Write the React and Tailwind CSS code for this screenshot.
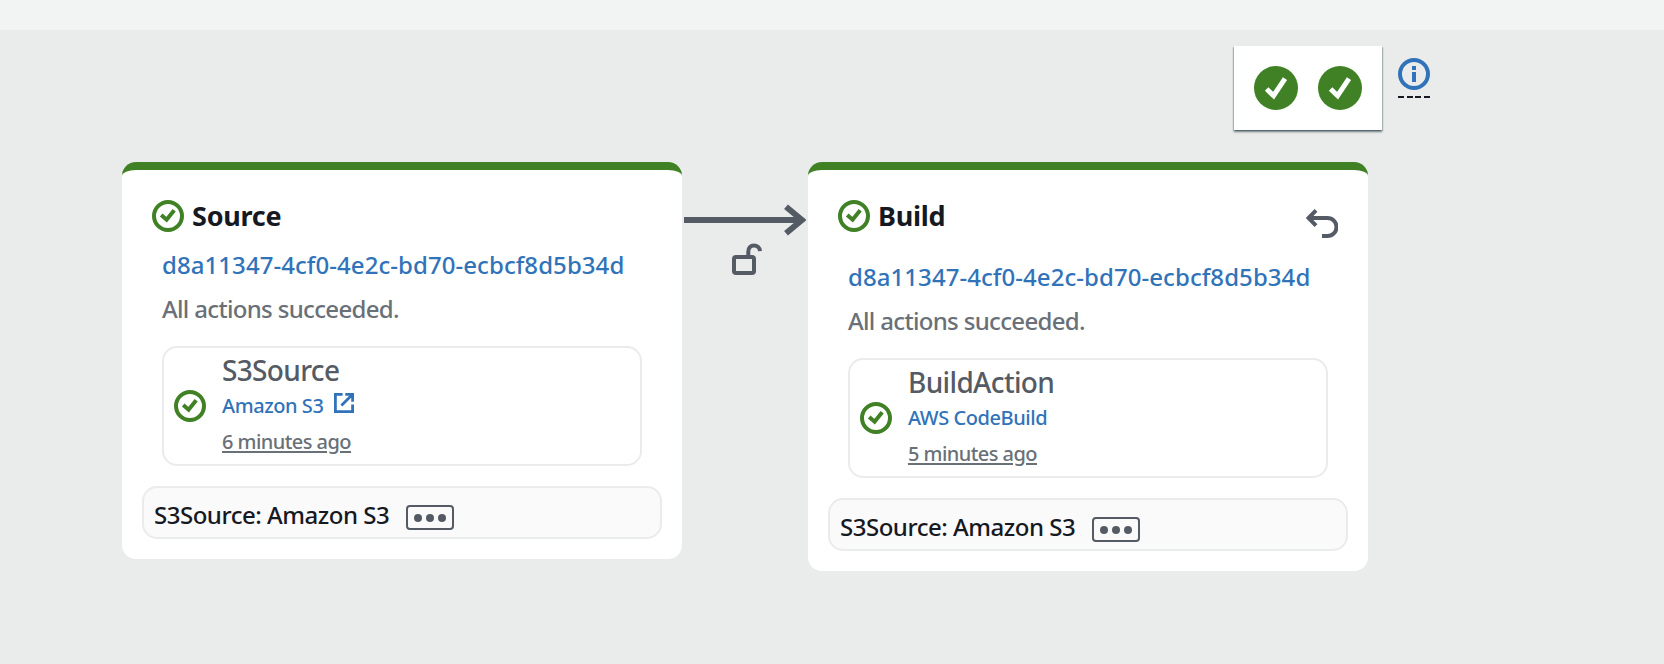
function StatusIcon() {
  return (
    <svg className="size-8 shrink-0" viewBox="0 0 32 32" fill="none" stroke="#3f8124" strokeWidth="4">
      <circle cx="16" cy="16" r="14" />
      <path d="M9.2 15l5.4 4.7 7.6-9.5" />
    </svg>
  );
}

function FilledCheck() {
  return (
    <svg className="size-11 shrink-0" viewBox="0 0 44 44" fill="none">
      <circle cx="22" cy="22" r="22" fill="#3f8124" />
      <path d="M12.6 23l7 6.7L31 12.6" stroke="#fff" strokeWidth="5" />
    </svg>
  );
}

function InfoIcon() {
  return (
    <svg className="size-8" viewBox="0 0 32 32" fill="none">
      <circle cx="16" cy="16" r="14" stroke="#3173b9" strokeWidth="4" />
      <path d="M14 8h4v4h-4zM14 14h4v10h-4z" fill="#3173b9" />
    </svg>
  );
}

function ExternalIcon() {
  return (
    <svg className="size-5 shrink-0" viewBox="0 0 20 20" fill="none" stroke="#3173b9" strokeWidth="2.8">
      <path d="M8.6 1.4H1.4v17.2h17.2v-7.2" />
      <path d="M11.3 1.4h7.3v7.3M18.4 1.6L7.4 12.6" />
    </svg>
  );
}

function UndoIcon() {
  return (
    <svg className="h-[30px] w-8" viewBox="0 0 32 30" fill="none" stroke="#545b64" strokeWidth="4">
      <path d="M3 9h18.5a8.9 8.9 0 0 1 0 18H16" />
      <path d="M10 1.4L2.6 9l7.4 7.6" />
    </svg>
  );
}

function ArrowIcon() {
  return (
    <svg className="h-8 w-[122px]" viewBox="0 0 122 32" fill="none" stroke="#545b64">
      <path d="M0 16h118" strokeWidth="6" />
      <path d="M102 2.8L118 16l-16 13.2" strokeWidth="6" />
    </svg>
  );
}

function UnlockIcon() {
  return (
    <svg className="h-8 w-[30px]" viewBox="0 0 30 32" fill="none" stroke="#545b64" strokeWidth="4">
      <rect x="2" y="14" width="20" height="16" rx="2" />
      <path d="M16.3 14V8.5c0-3.6 2.3-6 5.6-6s5.9 2.3 6.1 5.6" />
    </svg>
  );
}

function StageCard({ title, retry, action, provider, external, time }) {
  return (
    <section className="w-[560px] rounded-[14px] border-t-8 border-[#3f8124] bg-white px-5 pb-5">
      <header className="flex h-[62px] items-start justify-between pt-[30px] pr-[10px] pl-[10px]">
        <div className="flex items-center gap-2">
          <StatusIcon />
          <h2 className="text-[27px] leading-8 font-bold tracking-[-0.25px] text-[#16191f]">{title}</h2>
        </div>
        {retry && (
          <button className="mt-[9px]" aria-label="Retry">
            <UndoIcon />
          </button>
        )}
      </header>
      <div className={retry ? "px-5 pt-[27px]" : "px-5 pt-[15px]"}>
        <a className="block h-9 text-2xl leading-9 font-medium tracking-[0.06px] whitespace-nowrap text-[#3173b9]">
          d8a11347-4cf0-4e2c-bd70-ecbcf8d5b34d
        </a>
        <p className="mt-2 h-9 text-2xl leading-9 font-medium tracking-[-0.67px] whitespace-nowrap text-[#697077]">
          All actions succeeded.
        </p>
        <div className="mt-[19px] flex h-[120px] w-[480px] items-center gap-4 rounded-[15px] border-2 border-[#eaebeb] pl-[10px]">
          <StatusIcon />
          <div>
            <h3 className="h-[35px] text-[28px] leading-[34px] font-medium tracking-[-0.65px] text-[#545b64]">{action}</h3>
            <div className="flex h-9 items-center gap-[11px]">
              <a className="text-[20px] leading-9 font-medium tracking-[-0.45px] text-[#3173b9]">{provider}</a>
              {external && (
                <span className="pb-1.5">
                  <ExternalIcon />
                </span>
              )}
            </div>
            <p className="h-[35px] text-[20px] leading-9 font-medium tracking-[-0.55px] text-[#697077] underline decoration-2 underline-offset-2">
              {time}
            </p>
          </div>
        </div>
      </div>
      <footer className="mt-5 flex h-[53px] items-center gap-4 rounded-[15px] border-2 border-[#eaebeb] bg-[#fafafa] pt-1 pl-[10px]">
        <span className="w-[236px] text-2xl font-medium tracking-[-0.48px] whitespace-nowrap text-[#16191f]">S3Source: Amazon S3</span>
        <button
          aria-label="More"
          className="mt-1.5 flex h-[25px] w-12 items-center justify-center gap-[4.4px] rounded-[4px] border-2 border-[#545b64]"
        >
          <i className="size-2 rounded-full bg-[#545b64]" />
          <i className="size-2 rounded-full bg-[#545b64]" />
          <i className="size-2 rounded-full bg-[#545b64]" />
        </button>
      </footer>
    </section>
  );
}

export default function App() {
  return (
    <main className="h-[664px] w-[1664px] overflow-hidden bg-[#eaeceb] font-['Noto_Sans',sans-serif]">
      <div className="h-[30px] bg-[#f2f4f3]" />
      <div className="flex h-[132px] items-start justify-end gap-4 pt-4 pr-[234px]">
        <div className="flex h-[84px] w-[148px] items-center justify-center gap-5 bg-white shadow-[0_2px_2px_0_rgba(0,28,36,0.5),1px_1px_1px_0_rgba(0,28,36,0.15),-1px_1px_1px_0_rgba(0,28,36,0.15)]">
          <FilledCheck />
          <FilledCheck />
        </div>
        <div className="mt-3 flex w-8 flex-col gap-1.5">
          <InfoIcon />
          <div className="flex h-0.5 justify-between">
            <i className="w-1.5 bg-[#16191f]" />
            <i className="w-1.5 bg-[#16191f]" />
            <i className="w-1.5 bg-[#16191f]" />
            <i className="w-1.5 bg-[#16191f]" />
          </div>
        </div>
      </div>
      <div className="flex items-start pl-[122px]">
        <StageCard title="Source" action="S3Source" provider="Amazon S3" external time="6 minutes ago" />
        <div className="flex w-[126px] flex-col pt-[42px] pl-0.5">
          <ArrowIcon />
          <div className="mt-[7px] pl-12">
            <UnlockIcon />
          </div>
        </div>
        <StageCard title="Build" retry action="BuildAction" provider="AWS CodeBuild" time="5 minutes ago" />
      </div>
    </main>
  );
}
